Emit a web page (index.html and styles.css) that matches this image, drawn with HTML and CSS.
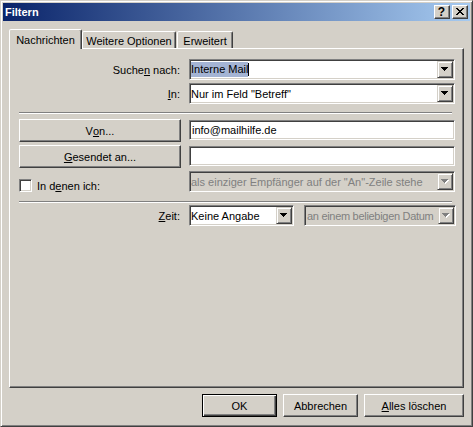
FILE: index.html
```html
<!DOCTYPE html>
<html lang="de">
<head>
<meta charset="utf-8">
<title>Filtern</title>
<link rel="stylesheet" href="styles.css">
</head>
<body>
<div class="window">
  <div class="caption">
    <span class="caption-title">Filtern</span>
    <span class="cap-btn cap-help">?</span>
    <span class="cap-btn cap-close"><svg class="px" width="8" height="7" viewBox="0 0 8 7"><path d="M0 0h2v1H0zM6 0h2v1H6zM1 1h2v1H1zM5 1h2v1H5zM2 2h4v1H2zM3 3h2v1H3zM2 4h4v1H2zM1 5h2v1H1zM5 5h2v1H5zM0 6h2v1H0zM6 6h2v1H6z" fill="#000"/></svg></span>
  </div>

  <div class="tabs">
    <div class="tab tab-active">Nachrichten</div>
    <div class="tab tab-weitere">Weitere Optionen</div>
    <div class="tab tab-erweitert">Erweitert</div>
  </div>

  <div class="panel">
    <div class="row">
      <span class="lbl">Suche<u>n</u> nach:</span>
      <div class="combo combo-wide">
        <span class="combo-text"><span class="sel">Interne Mail</span><span class="caret"></span></span>
        <span class="drop"><svg class="px" width="7" height="4" viewBox="0 0 7 4"><path d="M0 0h7v1H0zM1 1h5v1H1zM2 2h3v1H2zM3 3h1v1H3z" fill="#000"/></svg></span>
      </div>
    </div>

    <div class="row row-gap3">
      <span class="lbl"><u>I</u>n:</span>
      <div class="combo combo-wide">
        <span class="combo-text">Nur im Feld "Betreff"</span>
        <span class="drop"><svg class="px" width="7" height="4" viewBox="0 0 7 4"><path d="M0 0h7v1H0zM1 1h5v1H1zM2 2h3v1H2zM3 3h1v1H3z" fill="#000"/></svg></span>
      </div>
    </div>

    <div class="sep sep-1"></div>

    <div class="row row-btn row-von">
      <div class="btn btn-side">V<u>o</u>n...</div>
      <div class="field">info@mailhilfe.de</div>
    </div>

    <div class="row row-btn row-gap3">
      <div class="btn btn-side"><u>G</u>esendet an...</div>
      <div class="field"></div>
    </div>

    <div class="row row-check row-gap3">
      <div class="check-wrap"><span class="checkbox"></span><span>In d<u>e</u>nen ich:</span></div>
      <div class="combo combo-wide combo-disabled">
        <span class="combo-text">als einziger Empfänger auf der "An"-Zeile stehe</span>
        <span class="drop"><svg class="px" width="8" height="5" viewBox="0 0 8 5"><path d="M1 1h7v1H1zM2 2h5v1H2zM3 3h3v1H3zM4 4h1v1H4z" fill="#fff"/><path d="M0 0h7v1H0zM1 1h5v1H1zM2 2h3v1H2zM3 3h1v1H3z" fill="#808080"/></svg></span>
      </div>
    </div>

    <div class="sep sep-2"></div>

    <div class="row row-zeit">
      <span class="lbl"><u>Z</u>eit:</span>
      <div class="combo combo-zeit">
        <span class="combo-text">Keine Angabe</span>
        <span class="drop"><svg class="px" width="7" height="4" viewBox="0 0 7 4"><path d="M0 0h7v1H0zM1 1h5v1H1zM2 2h3v1H2zM3 3h1v1H3z" fill="#000"/></svg></span>
      </div>
      <div class="combo combo-datum combo-disabled">
        <span class="combo-text">an einem beliebigen Datum</span>
        <span class="drop"><svg class="px" width="8" height="5" viewBox="0 0 8 5"><path d="M1 1h7v1H1zM2 2h5v1H2zM3 3h3v1H3zM4 4h1v1H4z" fill="#fff"/><path d="M0 0h7v1H0zM1 1h5v1H1zM2 2h3v1H2zM3 3h1v1H3z" fill="#808080"/></svg></span>
      </div>
    </div>
  </div>

  <div class="footer">
    <div class="btn btn-ok">OK</div>
    <div class="btn btn-cancel">Abbrechen</div>
    <div class="btn btn-clear"><u>A</u>lles löschen</div>
  </div>
</div>
</body>
</html>
```

FILE: styles.css
```css
* {
  box-sizing: border-box;
}

html,
body {
  margin: 0;
  padding: 0;
}

body {
  width: 473px;
  height: 427px;
  overflow: hidden;
  background: #d4d0c8;
  font-family: "Liberation Sans", Arial, sans-serif;
  font-size: 11px;
  color: #000;
}

.px {
  display: block;
  shape-rendering: crispEdges;
}

.window {
  width: 473px;
  height: 427px;
  display: flex;
  flex-direction: column;
  background: #d4d0c8;
  border: 1px solid;
  border-color: #d4d0c8 #404040 #404040 #d4d0c8;
  box-shadow: inset 1px 1px #fff, inset -1px -1px #808080;
  padding: 2px;
}

/* Title bar */
.caption {
  flex: none;
  height: 18px;
  display: flex;
  align-items: center;
  padding: 0 2px;
  background: linear-gradient(to right, #0a246a, #a6caf0);
  color: #fff;
  font-weight: bold;
}

.caption-title {
  flex: 1;
  line-height: 18px;
}

.cap-btn {
  flex: none;
  width: 16px;
  height: 14px;
  display: flex;
  align-items: center;
  justify-content: center;
  background: #d4d0c8;
  border: 1px solid;
  border-color: #fff #404040 #404040 #fff;
  box-shadow: inset -1px -1px #808080;
  color: #000;
}

.cap-help {
  font-size: 12px;
  line-height: 12px;
  padding-right: 1px;
}

.cap-close {
  margin-left: 2px;
  padding: 0 1px 1px 0;
}

/* Tabs */
.tabs {
  flex: none;
  display: flex;
  align-items: flex-end;
  height: 20px;
  margin: 8px 0 -1px 6px;
  position: relative;
  z-index: 1;
}

.tab {
  height: 17px;
  margin-bottom: 1px;
  display: flex;
  align-items: center;
  justify-content: center;
  padding-top: 2px;
  white-space: nowrap;
  background: #d4d0c8;
  border: 1px solid;
  border-bottom: none;
  border-color: #fff #404040 transparent #fff;
  border-radius: 2px 2px 0 0;
  box-shadow: inset -1px 0 #808080;
}

.tab-active {
  width: 73px;
  height: 20px;
  margin-bottom: 0;
  padding-top: 0;
}

.tab-weitere {
  width: 94px;
}

.tab-erweitert {
  width: 56px;
  margin-left: 1px;
}

/* Panel */
.panel {
  flex: none;
  width: 455px;
  height: 340px;
  margin-left: 6px;
  display: flex;
  flex-direction: column;
  padding: 10px 0 0 9px;
  background: #d4d0c8;
  border: 1px solid;
  border-color: #fff #404040 #404040 #fff;
  box-shadow: inset -1px -1px #808080;
}

.row {
  display: flex;
  align-items: center;
  gap: 8px;
}

.row-gap3 {
  margin-top: 3px;
}

.lbl {
  flex: none;
  width: 162px;
  text-align: right;
  padding-right: 1px;
  white-space: nowrap;
}

.sep {
  width: 433px;
  height: 2px;
  border-top: 1px solid #808080;
  border-bottom: 1px solid #fff;
}

.sep-1 {
  margin-top: 8px;
}

.sep-2 {
  margin-top: 9px;
}

.row-von {
  margin-top: 5px;
}

.row-btn {
  align-items: flex-start;
}

.row-zeit {
  margin-top: 2px;
}

/* Combo boxes */
.combo {
  flex: none;
  height: 21px;
  display: flex;
  align-items: center;
  padding: 1px;
  background: #fff;
  border: 1px solid;
  border-color: #808080 #fff #fff #808080;
  box-shadow: inset 1px 1px #404040, inset -1px -1px #d4d0c8;
}

.combo-wide {
  width: 266px;
}

.combo-zeit {
  width: 105px;
}

.combo-datum {
  width: 152px;
  margin-left: 2px;
}

.combo-text {
  flex: 1;
  min-width: 0;
  overflow: hidden;
  white-space: nowrap;
  display: flex;
  align-items: center;
}

.combo-datum .combo-text {
  padding-left: 1px;
  letter-spacing: -0.3px;
}

.combo-disabled {
  background: #d4d0c8;
  color: #808080;
}

.sel {
  background: #a4b4d4;
  line-height: 15px;
}

.caret {
  display: inline-block;
  width: 1px;
  height: 13px;
  background: #000;
}

.drop {
  flex: none;
  display: block;
  width: 16px;
  height: 17px;
  padding: 5px 0 0 3px;
  background: #d4d0c8;
  border: 1px solid;
  border-color: #d4d0c8 #404040 #404040 #d4d0c8;
  box-shadow: inset 1px 1px #fff, inset -1px -1px #808080;
}

/* Text fields */
.field {
  flex: none;
  width: 266px;
  height: 20px;
  margin-top: 1px;
  display: flex;
  align-items: center;
  padding: 0 2px;
  background: #fff;
  border: 1px solid;
  border-color: #808080 #fff #fff #808080;
  box-shadow: inset 1px 1px #404040, inset -1px -1px #d4d0c8;
  white-space: nowrap;
}

/* Buttons */
.btn {
  flex: none;
  height: 23px;
  display: flex;
  align-items: center;
  justify-content: center;
  white-space: nowrap;
  background: #d4d0c8;
  border: 1px solid;
  border-color: #fff #404040 #404040 #fff;
  box-shadow: inset -1px -1px #808080;
}

.btn-side {
  width: 162px;
}

/* Checkbox */
.check-wrap {
  flex: none;
  width: 162px;
  align-self: flex-end;
  display: flex;
  align-items: center;
  gap: 5px;
}

.checkbox {
  flex: none;
  width: 13px;
  height: 13px;
  background: #fff;
  border: 1px solid;
  border-color: #808080 #fff #fff #808080;
  box-shadow: inset 1px 1px #404040, inset -1px -1px #d4d0c8;
}

/* Footer */
.footer {
  flex: none;
  display: flex;
  justify-content: flex-end;
  gap: 6px;
  margin: 6px 6px 0 0;
}

.btn-ok {
  width: 75px;
  border-color: #000;
  box-shadow: inset 1px 1px #fff, inset -1px -1px #404040, inset -2px -2px #808080;
}

.btn-cancel {
  width: 75px;
}

.btn-clear {
  width: 100px;
}
```
